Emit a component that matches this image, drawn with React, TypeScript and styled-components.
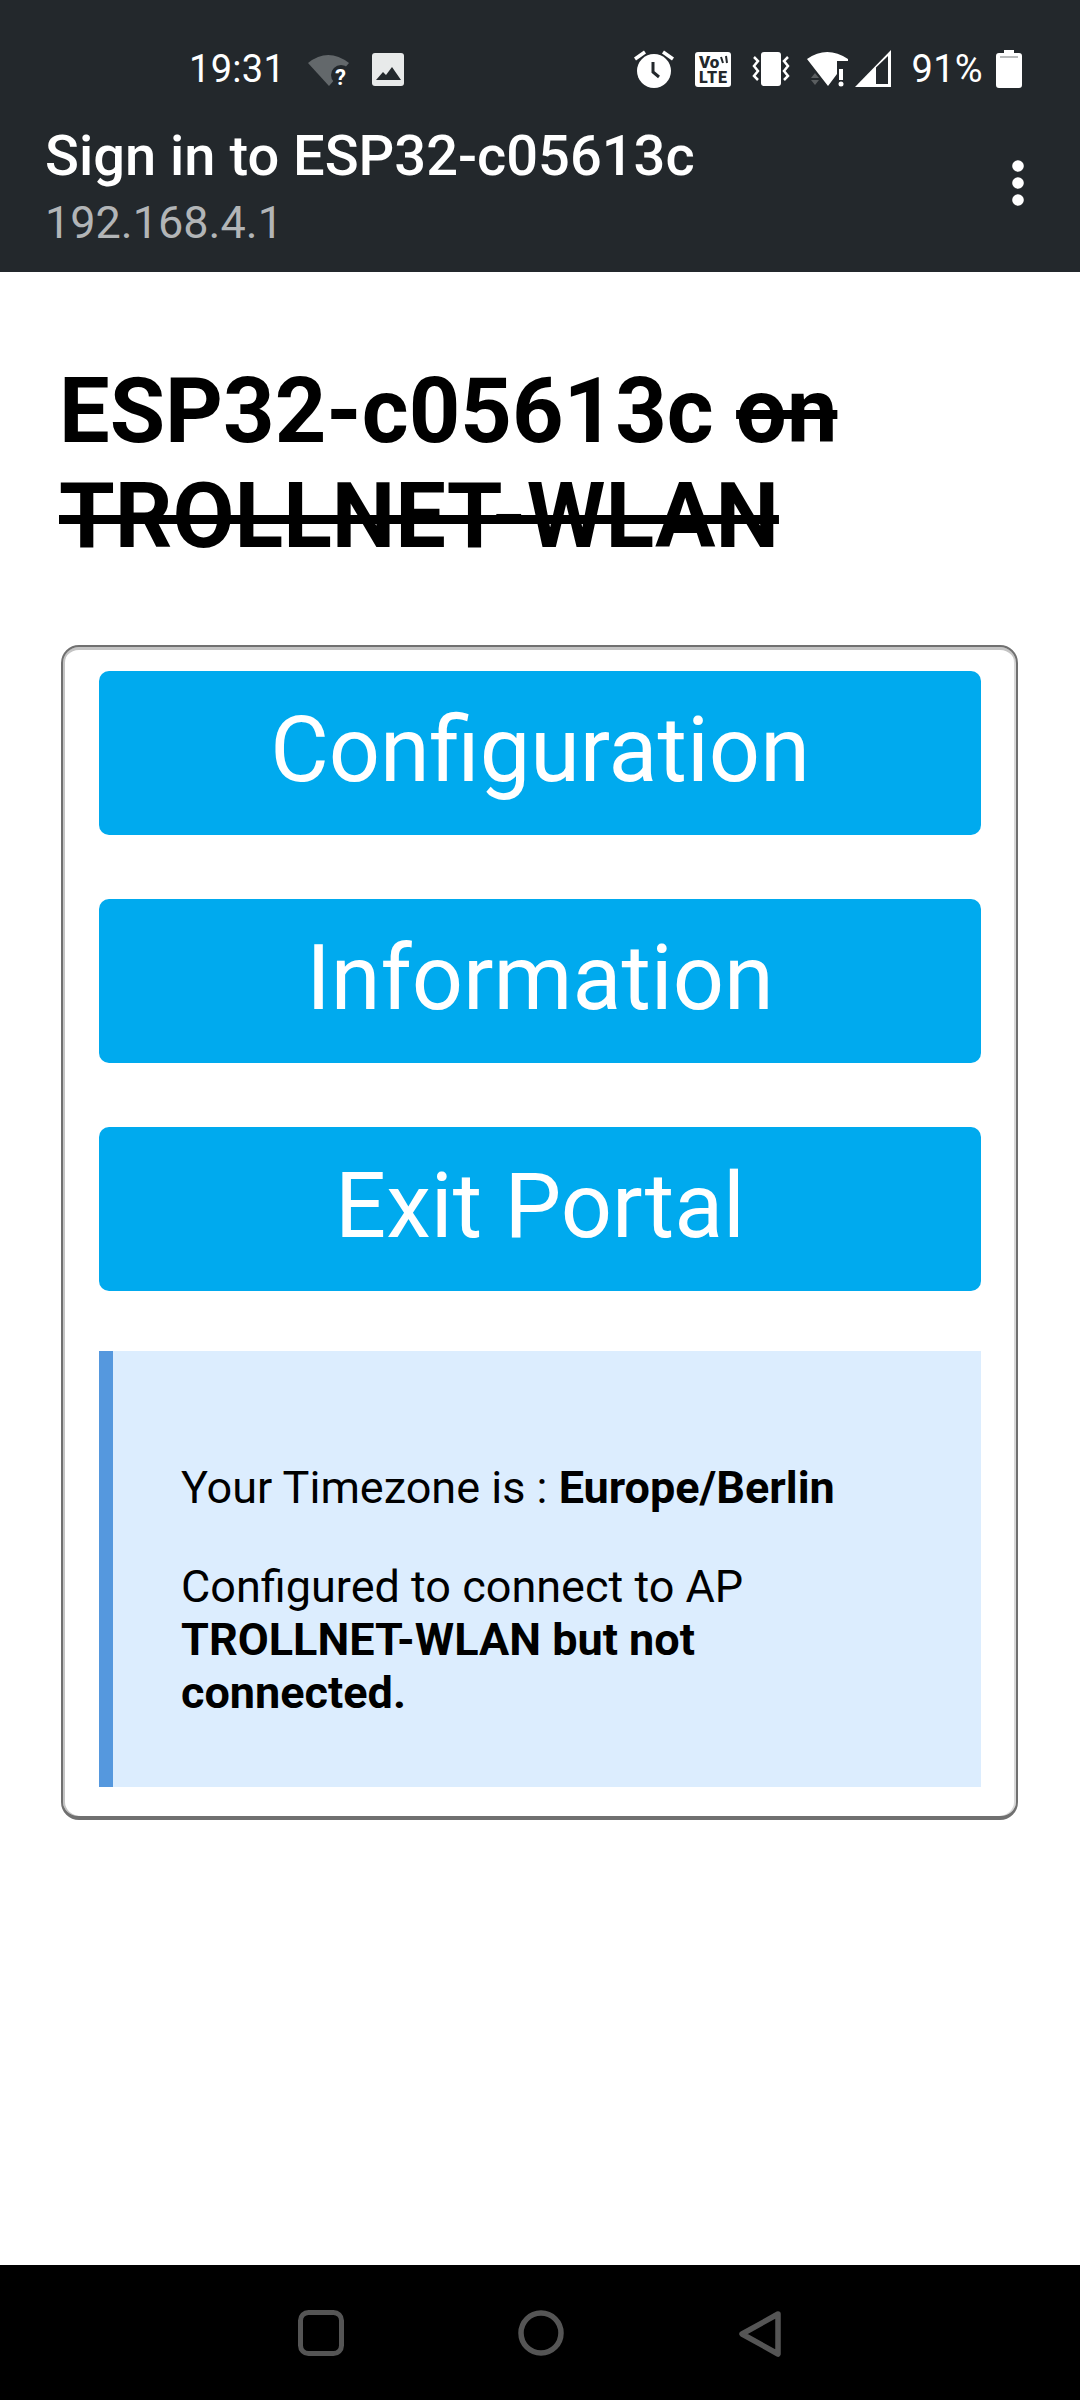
import React from 'react';
import styled, { createGlobalStyle } from 'styled-components';

const GlobalStyle = createGlobalStyle`
	html, body {
		margin: 0;
		padding: 0;
		background: #ffffff;
		font-family: 'Roboto', sans-serif;
	}
`;

const Page = styled.div`
	width: 1080px;
	height: 2400px;
	display: flex;
	flex-direction: column;
	overflow: hidden;
`;

const Header = styled.header`
	height: 272px;
	flex: none;
	box-sizing: border-box;
	background: #23282c;
	color: #ffffff;
`;

const StatusBar = styled.div`
	height: 98px;
	padding: 40px 58px 0 189px;
	box-sizing: border-box;
	display: flex;
	align-items: center;
	justify-content: space-between;
`;

const StatusGroup = styled.div`
	display: flex;
	align-items: center;
`;

const StatusText = styled.span<{ $left?: number }>`
	font-size: 38px;
	line-height: 44px;
	font-weight: 400;
	letter-spacing: 0.3px;
	margin-left: ${(p) => p.$left ?? 0}px;
`;

const StatusIcon = styled.svg<{ $left: number }>`
	display: block;
	flex: none;
	margin-left: ${(p) => p.$left}px;
`;

const AppBar = styled.div`
	display: flex;
	justify-content: space-between;
	align-items: flex-start;
	padding: 28px 56px 0 45px;
`;

const AppTitle = styled.div`
	font-size: 56px;
	line-height: 60px;
	font-weight: 500;
`;

const AppSubtitle = styled.div`
	font-size: 45px;
	line-height: 50px;
	color: #b2b5b7;
	margin-top: 12px;
`;

const MenuDots = styled.svg`
	display: block;
	margin-top: 34px;
`;

const Content = styled.main`
	flex: 1;
	box-sizing: border-box;
	padding: 87px 62px 0 61px;
	background: #ffffff;
`;

const Heading = styled.h1`
	margin: 0 0 76px -2px;
	font-size: 90px;
	line-height: 105px;
	font-weight: 700;
	color: #000000;
`;

const Card = styled.section`
	box-sizing: border-box;
	height: 1175px;
	padding: 24px 35px 0 36px;
	border: 2px solid #707070;
	border-bottom-width: 4px;
	border-radius: 18px;
	box-shadow: inset 0 3px 0 #c4c4c4, inset 2px 0 0 #c4c4c4, inset -2px 0 0 #d8d8d8;
	background: #ffffff;
	display: flex;
	flex-direction: column;
`;

const MenuButton = styled.button`
	height: 164px;
	flex: none;
	border: 0;
	border-radius: 10px;
	padding: 0 0 5px;
	margin-bottom: 64px;
	background: #00aaee;
	color: #ffffff;
	font-family: 'Roboto', sans-serif;
	font-size: 90px;
	font-weight: 400;
	text-align: center;
`;

const InfoBox = styled.div`
	box-sizing: border-box;
	height: 436px;
	margin-top: -4px;
	padding: 110px 100px 0 68px;
	border-left: 14px solid #5598de;
	background: #dcedfe;
	color: #000000;
	font-size: 45px;
	line-height: 53px;
`;

const InfoLine = styled.p`
	margin: 0 0 46px;
`;

const NavBar = styled.nav`
	height: 135px;
	flex: none;
	background: #000000;
	display: flex;
	align-items: flex-start;
	justify-content: center;
	gap: 174px;
	padding-top: 45px;
	box-sizing: border-box;
`;

const App = () => (
	<Page>
		<GlobalStyle />
		<Header>
			<StatusBar>
				<StatusGroup>
					<StatusText>19:31</StatusText>
					<StatusIcon $left={23} width="42" height="34" viewBox="0 0 42 34">
						<path d="M0 11 Q20 -5 41 11 L21 34 Z" fill="#63686b" />
						<circle cx="33" cy="23" r="10" fill="#23282c" />
						<text x="27" y="33" fontFamily="Roboto, sans-serif" fontSize="22" fontWeight="700" fill="#ffffff">?</text>
					</StatusIcon>
					<StatusIcon $left={22} width="32" height="33" viewBox="0 0 32 33">
						<rect width="32" height="33" rx="3" fill="#e8eaea" />
						<path d="M4 27 L11 19 L14 22 L20 14 L29 27 Z" fill="#23282c" />
					</StatusIcon>
				</StatusGroup>
				<StatusGroup>
					<StatusIcon $left={0} width="40" height="38" viewBox="0 0 40 38">
						<circle cx="20" cy="21" r="17" fill="#ffffff" />
						<path d="M19 12 V22 L25 27" fill="none" stroke="#23282c" strokeWidth="3" />
						<path d="M1 9 L11 2 M39 9 L29 2" stroke="#ffffff" strokeWidth="3.5" />
					</StatusIcon>
					<StatusIcon $left={21} width="36" height="35" viewBox="0 0 36 35">
						<rect width="36" height="35" rx="3" fill="#ffffff" />
						<text x="4" y="16" fontFamily="Roboto, sans-serif" fontSize="17" fontWeight="900" fill="#23282c">Vo</text>
						<path d="M26 5 L28 11 M31 4 L32 11" stroke="#23282c" strokeWidth="2" />
						<text x="4" y="31" fontFamily="Roboto, sans-serif" fontSize="16" fontWeight="900" fill="#23282c" textLength="28">LTE</text>
					</StatusIcon>
					<StatusIcon $left={21} width="38" height="34" viewBox="0 0 38 34">
						<rect x="9" y="0" width="20" height="34" rx="3" fill="#ffffff" />
						<path d="M2 5 L6 9 L2 14 L6 19 L2 24 L6 28 M36 5 L32 9 L36 14 L32 19 L36 24 L32 28" fill="none" stroke="#ffffff" strokeWidth="2.5" />
					</StatusIcon>
					<StatusIcon $left={17} width="42" height="36" viewBox="0 0 42 36">
						<path d="M0 8 Q20 -6 41 8 L41 10 H30 V23 L21 35 Z" fill="#ffffff" />
						<path d="M4 27 L8 22 L12 27 Z M4 29 L12 29 L8 34 Z" fill="#5a5e60" />
						<rect x="32" y="18" width="4" height="11" fill="#ffffff" />
						<circle cx="34" cy="33" r="2.5" fill="#ffffff" />
					</StatusIcon>
					<StatusIcon $left={5} width="38" height="38" viewBox="0 0 38 38">
						<path d="M1 37 L37 0 V37 Z" fill="#ffffff" />
						<path d="M22 17.5 L34 6 V34 H22 Z" fill="#23282c" />
					</StatusIcon>
					<StatusText $left={20}>91%</StatusText>
					<StatusIcon $left={13} width="26" height="38" viewBox="0 0 26 38">
						<path d="M8 0 H18 V3 H23 Q26 3 26 6 V35 Q26 38 23 38 H3 Q0 38 0 35 V6 Q0 3 3 3 H8 Z" fill="#ffffff" />
						<rect x="4" y="6" width="18" height="2" fill="#b9bbbc" />
					</StatusIcon>
				</StatusGroup>
			</StatusBar>
			<AppBar>
				<div>
					<AppTitle>Sign in to ESP32-c05613c</AppTitle>
					<AppSubtitle>192.168.4.1</AppSubtitle>
				</div>
				<MenuDots width="12" height="46" viewBox="0 0 12 46">
					<circle cx="6" cy="6" r="5.8" fill="#ffffff" />
					<circle cx="6" cy="23" r="5.8" fill="#ffffff" />
					<circle cx="6" cy="40" r="5.8" fill="#ffffff" />
				</MenuDots>
			</AppBar>
		</Header>
		<Content>
			<Heading>
				ESP32-c05613c <s>on TROLLNET-WLAN</s>
			</Heading>
			<Card>
				<MenuButton>Configuration</MenuButton>
				<MenuButton>Information</MenuButton>
				<MenuButton>Exit Portal</MenuButton>
				<InfoBox>
					<InfoLine>
						Your Timezone is : <b>Europe/Berlin</b>
					</InfoLine>
					<InfoLine>
						Configured to connect to AP <b>TROLLNET-WLAN but not connected.</b>
					</InfoLine>
				</InfoBox>
			</Card>
		</Content>
		<NavBar>
			<svg width="46" height="46" viewBox="0 0 46 46">
				<rect x="2.5" y="2.5" width="41" height="41" rx="8" fill="none" stroke="#555555" strokeWidth="5" />
			</svg>
			<svg width="46" height="46" viewBox="0 0 46 46">
				<circle cx="23" cy="23" r="20" fill="none" stroke="#555555" strokeWidth="5.5" />
			</svg>
			<svg width="44" height="48" viewBox="0 0 44 48">
				<path d="M40 4 L4 24 L40 44 Z" fill="none" stroke="#555555" strokeWidth="5.5" strokeLinejoin="round" />
			</svg>
		</NavBar>
	</Page>
);

export default App;
